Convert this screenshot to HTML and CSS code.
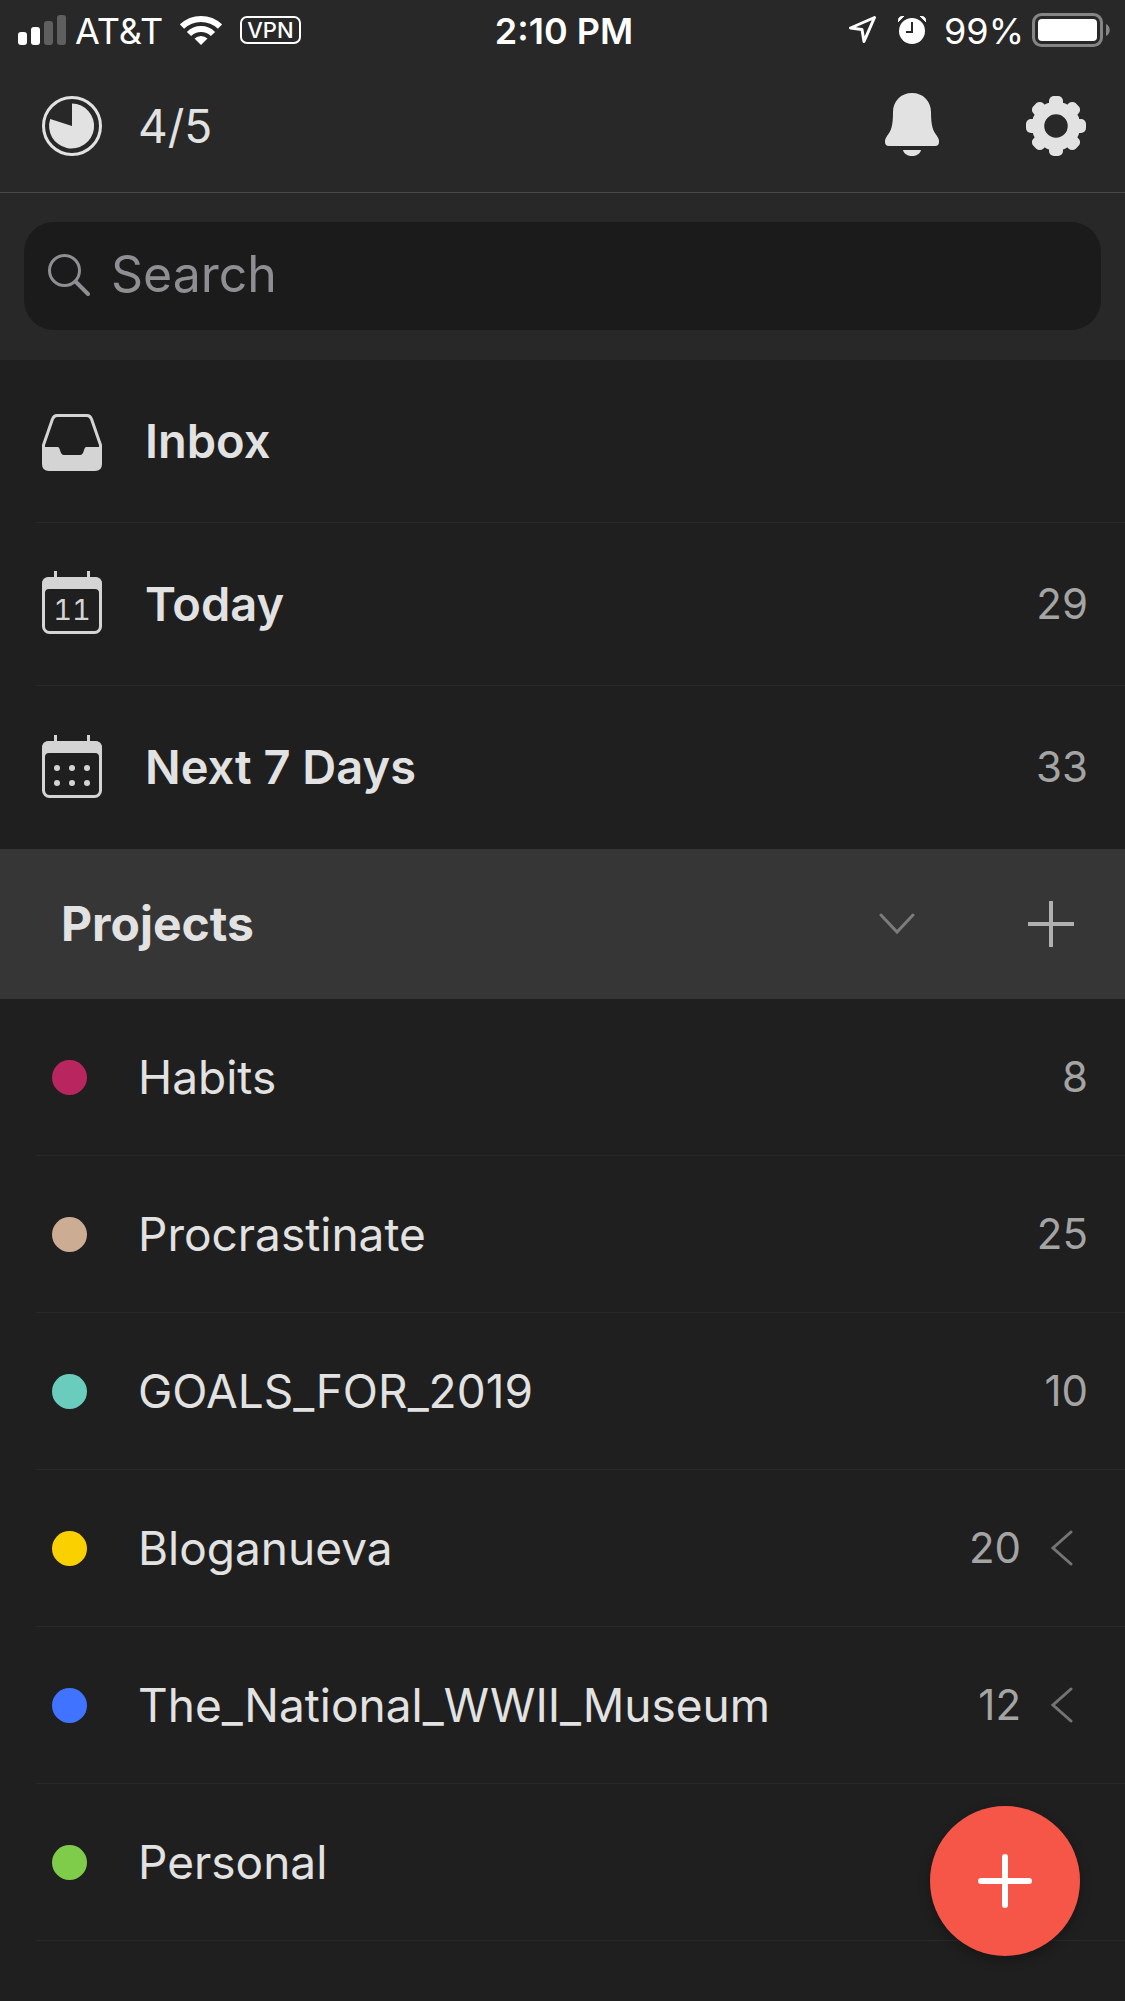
FILE: index.html
```html
<!DOCTYPE html>
<html lang="en">
<head>
  <meta charset="UTF-8">
  <meta name="viewport" content="width=device-width, initial-scale=1.0">
  <title>Projects</title>
  <link rel="stylesheet" href="styles.css">
</head>
<body>

<div class="app">
  <div class="status-bar">
    <div class="status-left">
      <svg width="48" height="30" viewBox="0 0 48 30" fill="#fff">
        <rect x="0" y="17" width="9" height="13" rx="3"/>
        <rect x="13" y="12" width="9" height="18" rx="3"/>
        <rect x="26" y="6" width="9" height="24" rx="3" fill="#5f5f5f"/>
        <rect x="39" y="0" width="9" height="30" rx="3" fill="#5f5f5f"/>
      </svg>
      <span class="carrier">AT&amp;T</span>
      <svg class="wifi" width="42" height="30" viewBox="0 0 42 30" fill="none" stroke="#fff" stroke-width="6">
        <path d="M2 11.5A27.5 27.5 0 0 1 40 11.5"/>
        <path d="M9 19A17 17 0 0 1 33 19"/>
        <path d="M21 30L14.5 23.5A9.5 9.5 0 0 1 27.5 23.5Z" fill="#fff" stroke="none"/>
      </svg>
      <span class="vpn">VPN</span>
    </div>
    <span class="clock">2:10 PM</span>
    <div class="status-right">
      <svg class="location" width="28" height="28" viewBox="0 0 28 28" fill="none" stroke="#fff" stroke-width="3" stroke-linejoin="round">
        <path d="M25.5 1.5L1.5 12L13 13.5L15 25.5Z"/>
      </svg>
      <svg class="alarm" width="28" height="28" viewBox="0 0 28 28">
        <circle cx="14" cy="15" r="13" fill="#fff"/>
        <path d="M0 6C0 2 2 0 6 0L0 6ZM28 6C28 2 26 0 22 0L28 6Z" fill="#fff" stroke="#fff" stroke-linejoin="round"/>
        <path d="M14 6V16H8" fill="none" stroke="#282828" stroke-width="2"/>
      </svg>
      <span class="percent">99%</span>
      <svg width="78" height="34" viewBox="0 0 78 34">
        <rect x="1.5" y="1.5" width="68" height="31" rx="8" fill="none" stroke="#858585" stroke-width="3"/>
        <rect x="6" y="6" width="59" height="22" rx="4" fill="#fff"/>
        <path d="M74 11C79 13 79 21 74 23Z" fill="#858585"/>
      </svg>
    </div>
  </div>

  <header class="top-bar">
    <a class="goal" href="#">
      <svg width="60" height="60" viewBox="0 0 60 60">
        <circle cx="30" cy="30" r="28.5" fill="none" stroke="#e2e2e2" stroke-width="3"/>
        <path d="M30 30V7.500A22.500 22.500 0 1 1 8.200 23Z" fill="#e2e2e2"/>
      </svg>
      <span>4/5</span>
    </a>
    <button class="icon-button" aria-label="Notifications">
      <svg width="54" height="66" viewBox="0 0 54 66" fill="#e2e2e2">
        <path d="M27 0C16 0 8 8 8 19C8 33 6 38 2 43C0 46 0 47 0 49Q0 53 4 53H50Q54 53 54 49C54 47 54 46 52 43C48 38 46 33 46 19C46 8 38 0 27 0Z"/>
        <path d="M18 57H36C35 61 31 63 27 63S19 61 18 57Z"/>
      </svg>
    </button>
    <button class="icon-button" aria-label="Settings">
      <svg width="60" height="60" viewBox="-30 -30 60 60" fill="#e2e2e2">
        <circle r="18" fill="none" stroke="#e2e2e2" stroke-width="12.500"/>
        <rect x="-7" y="-30" width="14" height="12" rx="5"/>
        <rect x="-7" y="-30" width="14" height="12" rx="5" transform="rotate(45)"/>
        <rect x="-7" y="-30" width="14" height="12" rx="5" transform="rotate(90)"/>
        <rect x="-7" y="-30" width="14" height="12" rx="5" transform="rotate(135)"/>
        <rect x="-7" y="-30" width="14" height="12" rx="5" transform="rotate(180)"/>
        <rect x="-7" y="-30" width="14" height="12" rx="5" transform="rotate(225)"/>
        <rect x="-7" y="-30" width="14" height="12" rx="5" transform="rotate(270)"/>
        <rect x="-7" y="-30" width="14" height="12" rx="5" transform="rotate(315)"/>
      </svg>
    </button>
  </header>

  <div class="search">
    <label class="search-box">
      <svg width="42" height="42" viewBox="0 0 42 42" fill="none" stroke="#8e8e93" stroke-linecap="round">
        <circle cx="16.500" cy="16.500" r="15" stroke-width="3"/>
        <path d="M28 28L40 40" stroke-width="4"/>
      </svg>
      <input type="text" placeholder="Search" aria-label="Search">
    </label>
  </div>

  <nav class="views">
    <a class="view" href="#">
      <svg width="60" height="66" viewBox="0 0 60 66">
        <path d="M1.500 39V37L10.500 11Q12 7.500 15 7.500H45Q48 7.500 49.500 11L58.500 37V39" fill="none" stroke="#d4d4d4" stroke-width="3"/>
        <path d="M0 39H16Q17 39 18 42Q19 47 22 47H38Q41 47 42 42Q43 39 44 39H60V56Q60 63 53 63H7Q0 63 0 56Z" fill="#d4d4d4"/>
      </svg>
      <span class="name">Inbox</span>
    </a>
    <a class="view" href="#">
      <svg width="60" height="66" viewBox="0 0 60 66">
        <path d="M13.500 0V8M46.500 0V8" stroke="#d4d4d4" stroke-width="3"/>
        <rect x="1.500" y="7.500" width="57" height="54" rx="6" fill="none" stroke="#d4d4d4" stroke-width="3"/>
        <path d="M0 22V13Q0 6 7 6H53Q60 6 60 13V22H57Q57 18 53 18H7Q3 18 3 22Z" fill="#d4d4d4"/>
        <text class="day" x="30" y="49" text-anchor="middle">11</text>
      </svg>
      <span class="name">Today</span>
      <span class="count">29</span>
    </a>
    <a class="view" href="#">
      <svg width="60" height="66" viewBox="0 0 60 66" fill="#d4d4d4">
        <path d="M13.500 0V8M46.500 0V8" stroke="#d4d4d4" stroke-width="3"/>
        <rect x="1.500" y="7.500" width="57" height="54" rx="6" fill="none" stroke="#d4d4d4" stroke-width="3"/>
        <path d="M0 22V13Q0 6 7 6H53Q60 6 60 13V22H57Q57 18 53 18H7Q3 18 3 22Z"/>
        <circle cx="15" cy="33" r="3"/>
        <circle cx="30" cy="33" r="3"/>
        <circle cx="45" cy="33" r="3"/>
        <circle cx="15" cy="48" r="3"/>
        <circle cx="30" cy="48" r="3"/>
        <circle cx="45" cy="48" r="3"/>
      </svg>
      <span class="name">Next 7 Days</span>
      <span class="count">33</span>
    </a>
  </nav>

  <div class="section-header">
    <h2>Projects</h2>
    <button class="icon-button" aria-label="Collapse projects">
      <svg width="36" height="22" viewBox="0 0 36 22" fill="none" stroke="#7c7c7c" stroke-width="3" stroke-linecap="round">
        <path d="M2 2L18 19L34 2"/>
      </svg>
    </button>
    <button class="icon-button" aria-label="Add project">
      <svg width="46" height="46" viewBox="0 0 46 46" stroke="#b0b0b0" stroke-width="4">
        <path d="M23 0V46M0 23H46"/>
      </svg>
    </button>
  </div>

  <nav class="projects">
    <a class="project" href="#">
      <span class="dot magenta"></span>
      <span class="name">Habits</span>
      <span class="count">8</span>
    </a>
    <a class="project" href="#">
      <span class="dot tan"></span>
      <span class="name">Procrastinate</span>
      <span class="count">25</span>
    </a>
    <a class="project" href="#">
      <span class="dot teal"></span>
      <span class="name">GOALS_FOR_2019</span>
      <span class="count">10</span>
    </a>
    <a class="project" href="#">
      <span class="dot yellow"></span>
      <span class="name">Bloganueva</span>
      <span class="count">20</span>
      <svg class="arrow" width="22" height="36" viewBox="0 0 22 36">
        <path d="M20 2L2 18L20 34"/>
      </svg>
    </a>
    <a class="project" href="#">
      <span class="dot blue"></span>
      <span class="name">The_National_WWII_Museum</span>
      <span class="count">12</span>
      <svg class="arrow" width="22" height="36" viewBox="0 0 22 36">
        <path d="M20 2L2 18L20 34"/>
      </svg>
    </a>
    <a class="project" href="#">
      <span class="dot green"></span>
      <span class="name">Personal</span>
    </a>
    <a class="project" href="#">
      <span class="dot magenta"></span>
      <span class="name">Vacation</span>
    </a>
  </nav>

  <button class="add-task" aria-label="Add task">
    <svg width="54" height="54" viewBox="0 0 54 54" stroke="#fff" stroke-width="6" stroke-linecap="round">
      <path d="M27 3V51M3 27H51"/>
    </svg>
  </button>
</div>

</body>
</html>
```
FILE: styles.css
```css
* {
  box-sizing: border-box;
}
body {
  margin: 0;
  font-family: Inter, 'Liberation Sans', sans-serif;
  background-color: #1f1f1f;
  color: #e2e2e2;
}
.app {
  height: 100vh;
  overflow: hidden;
}
a {
  color: inherit;
  text-decoration: none;
}
svg {
  display: block;
  flex-shrink: 0;
}
.icon-button {
  padding: 0;
  border: none;
  background: none;
  cursor: pointer;
}

/* status bar */
.status-bar {
  display: grid;
  grid-template-columns: 1fr auto 1fr;
  align-items: center;
  height: 60px;
  padding: 0 15px 0 18px;
  background-color: #282828;
  color: #fff;
  font-size: 36px;
}
.status-left,
.status-right {
  display: flex;
  align-items: center;
}
.status-right {
  justify-content: flex-end;
}
.carrier {
  margin: 0 17px 0 9px;
}
.carrier,
.clock,
.percent {
  padding-top: 2px;
}
.vpn {
  height: 28px;
  margin-left: 18px;
  padding: 0 5px;
  border: 2px solid #fff;
  border-radius: 7px;
  font-size: 22px;
  font-weight: 500;
  line-height: 24px;
}
.clock {
  font-weight: 600;
}
.alarm {
  margin: 0 18px 0 21px;
}
.percent {
  margin-right: 8px;
}

/* top bar and search */
.top-bar {
  display: flex;
  align-items: center;
  gap: 87px;
  height: 133px;
  padding: 0 39px 0 42px;
  border-bottom: 1px solid #484848;
  background-color: #282828;
}
.goal {
  display: flex;
  align-items: center;
  gap: 36px;
  flex: 1;
  font-size: 46px;
}
.search {
  padding: 29px 24px 30px;
  background-color: #282828;
}
.search-box {
  display: flex;
  align-items: center;
  gap: 21px;
  height: 108px;
  padding: 0 24px 2px;
  border-radius: 30px;
  background-color: #1b1b1b;
}
.search-box input {
  flex: 1;
  min-width: 0;
  padding: 0 0 2px;
  border: none;
  outline: none;
  background: none;
  color: #e2e2e2;
  font-family: inherit;
  font-size: 50px;
}
.search-box input::placeholder {
  color: #8e8e93;
  opacity: 1;
}

/* rows */
.view,
.project {
  display: flex;
  align-items: center;
  margin-left: 36px;
  padding-right: 37px;
  border-bottom: 1px solid #292929;
}
.view {
  height: 163px;
  padding-left: 6px;
  gap: 43px;
  font-size: 47px;
  font-weight: 600;
}
.view:last-child {
  border-bottom: none;
}
.project {
  height: 157px;
  padding-left: 16px;
  gap: 51px;
  font-size: 46px;
}
.name {
  flex: 1;
}
.view .name,
.count {
  padding-bottom: 2px;
}
.count {
  color: #a4a4a4;
  font-size: 42px;
  font-weight: 400;
}
.day {
  fill: #d4d4d4;
  font-size: 29px;
  font-weight: 400;
  font-variant-numeric: tabular-nums;
}
.arrow {
  margin: 0 15px 0 -21px;
  fill: none;
  stroke: #747474;
  stroke-width: 3;
  stroke-linecap: round;
}
.dot {
  width: 35px;
  height: 35px;
  border-radius: 50%;
}
.magenta {
  background-color: #b8255f;
}
.tan {
  background-color: #ccac93;
}
.teal {
  background-color: #6accbc;
}
.yellow {
  background-color: #fad000;
}
.blue {
  background-color: #4073ff;
}
.green {
  background-color: #7ecc49;
}

.section-header {
  display: flex;
  align-items: center;
  gap: 113px;
  height: 150px;
  padding: 0 51px 0 61px;
  background-color: #363636;
}
.section-header h2 {
  flex: 1;
  margin: 0;
  padding-bottom: 2px;
  font-size: 48px;
  font-weight: 700;
}

.add-task {
  position: fixed;
  right: 45px;
  bottom: 45px;
  display: flex;
  align-items: center;
  justify-content: center;
  width: 150px;
  height: 150px;
  padding: 0;
  border: none;
  border-radius: 50%;
  background-color: #f65648;
  box-shadow: 0 4px 12px rgba(0, 0, 0, 0.3);
  cursor: pointer;
}
```
